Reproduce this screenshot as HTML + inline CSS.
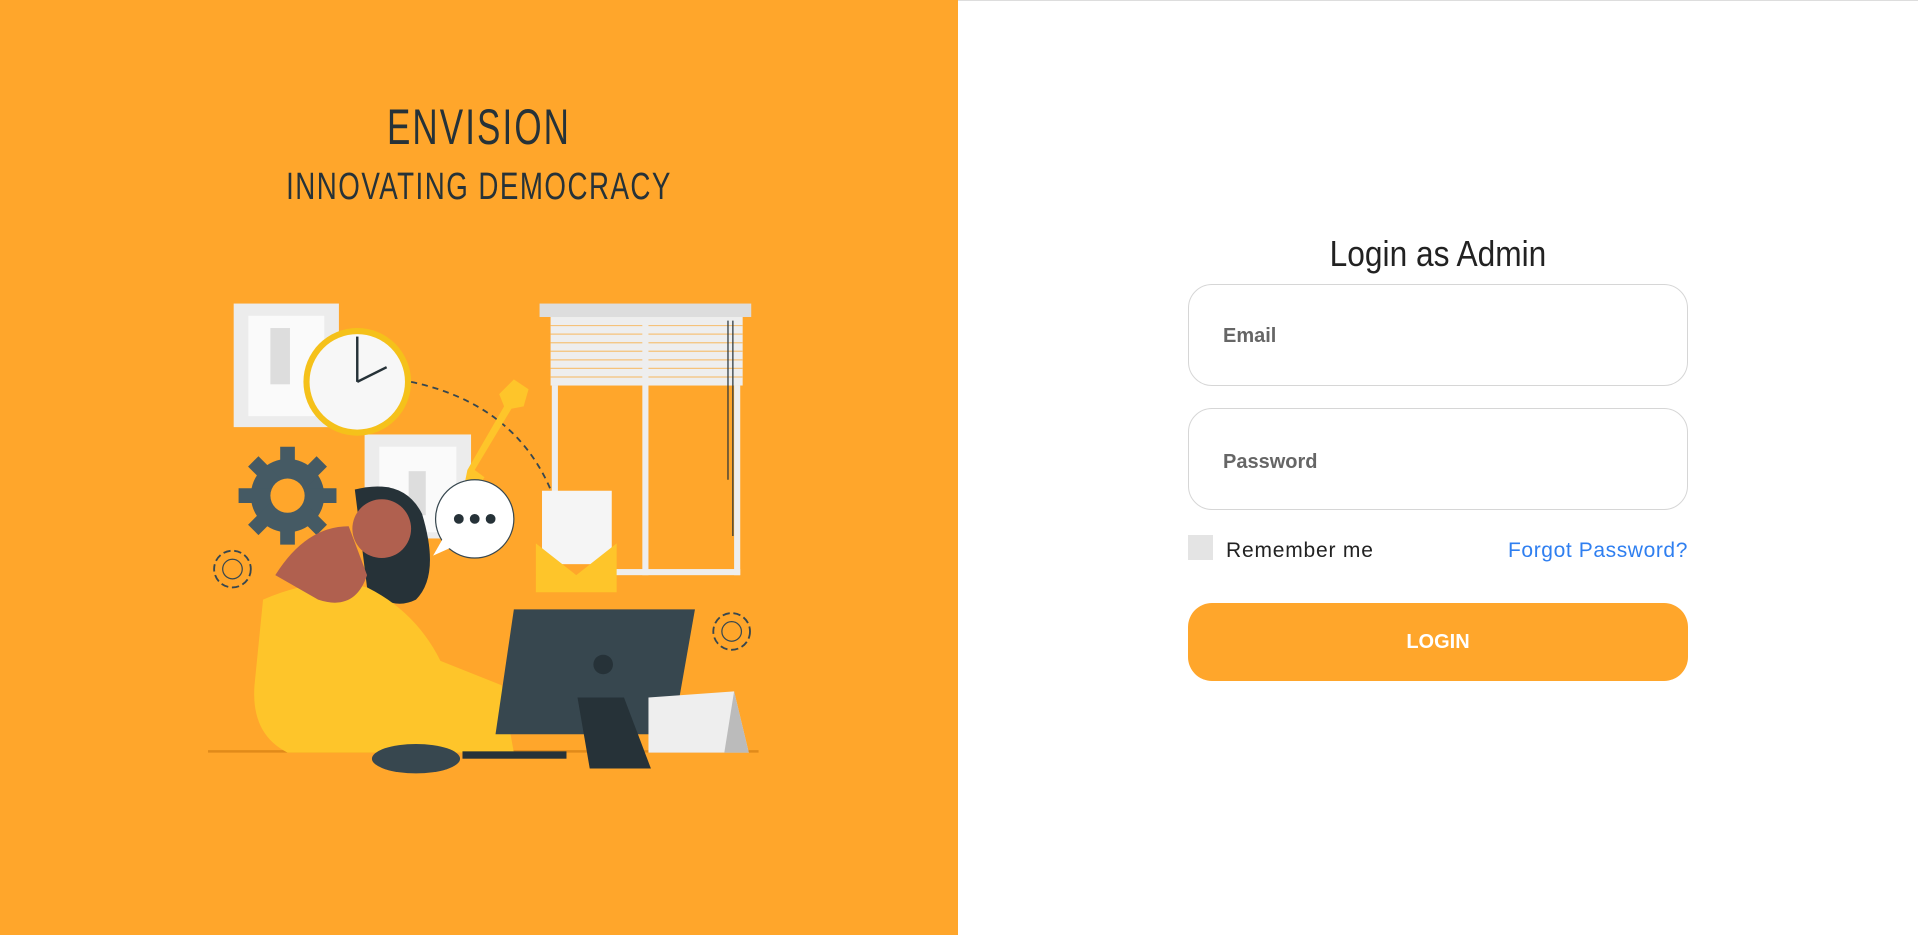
<!DOCTYPE html>
<html><head><meta charset="utf-8"><style>
html,body{margin:0;padding:0;width:1918px;height:935px;overflow:hidden;background:#fff;font-family:"Liberation Sans",sans-serif}
.left{position:absolute;left:0;top:0;width:958px;height:935px;background:#ffa62b}
.topline{position:absolute;left:958px;top:0;width:960px;height:1px;background:#ddd}
.cond{font-family:"Liberation Sans",sans-serif;color:#263238;text-align:center;position:absolute;left:0;width:958px;white-space:nowrap}
.t1{top:98px;font-size:50px;letter-spacing:3px;transform:scaleX(0.70)}
.t2{top:166px;font-size:38px;letter-spacing:2px;transform:scaleX(0.73)}
svg.ill{position:absolute;left:0;top:0}
.h{position:absolute;left:1188px;width:500px;top:233px;text-align:center;font-size:36px;color:#222;transform:scaleX(0.88)}
.inp{position:absolute;left:1188px;height:102px;border:1px solid #d6d6d6;border-radius:24px;box-sizing:border-box;width:500px}
.inp span{position:absolute;left:34px;font-weight:bold;font-size:20px;color:#666}
.cb{position:absolute;left:1188px;top:535px;width:25px;height:25px;background:#e4e4e4}
.rm{position:absolute;left:1226px;top:539px;font-size:21px;color:#222;letter-spacing:0.8px}
.fp{position:absolute;right:230px;top:539px;font-size:21px;color:#2f7ff0;letter-spacing:0.6px}
.btn{position:absolute;left:1188px;top:603px;width:500px;height:78px;background:#ffa62b;border-radius:24px;color:#fff;font-weight:bold;font-size:20px;text-align:center;line-height:78px}
</style></head><body>
<div class="left">
<svg class="ill" width="958" height="935" viewBox="0 0 783 764">
<line x1="170" y1="614" x2="620" y2="614" stroke="#e08a1a" stroke-width="2"/>
<rect x="191" y="248" width="86" height="101" fill="#ececec"/><rect x="203" y="258" width="62" height="82" fill="#fafafa"/><rect x="221" y="268" width="16" height="46" fill="#ddd"/>
<rect x="298" y="355" width="87" height="85" fill="#ececec"/><rect x="310" y="365" width="63" height="70" fill="#fafafa"/><rect x="334" y="385" width="14" height="36" fill="#ddd"/>
<circle cx="292" cy="312" r="44" fill="#f5c11a"/><circle cx="292" cy="312" r="39" fill="#f7f7f7"/>
<line x1="292" y1="312" x2="292" y2="275" stroke="#263238" stroke-width="2"/><line x1="292" y1="312" x2="316" y2="300" stroke="#263238" stroke-width="2"/>
<path d="M336 312 Q420 330 450 400" fill="none" stroke="#37474f" stroke-width="1.5" stroke-dasharray="5 4"/>
<path d="M420 310 l12 8 -4 14 -10 2 -30 50 8 6 -8 12 -8-8 2-10 30-52 -4-10z" fill="#fec52a"/>
<g fill="#455a64"><circle cx="235" cy="405" r="30"/><g stroke="#455a64" stroke-width="12"><line x1="235" y1="365" x2="235" y2="445"/><line x1="195" y1="405" x2="275" y2="405"/><line x1="207" y1="377" x2="263" y2="433"/><line x1="263" y1="377" x2="207" y2="433"/></g></g><circle cx="235" cy="405" r="14" fill="#ffa62b"/>
<circle cx="190" cy="465" r="15" fill="none" stroke="#37474f" stroke-width="1.5" stroke-dasharray="6 3"/><circle cx="190" cy="465" r="8" fill="none" stroke="#37474f"/>
<circle cx="598" cy="516" r="15" fill="none" stroke="#37474f" stroke-width="1.5" stroke-dasharray="6 3"/><circle cx="598" cy="516" r="8" fill="none" stroke="#37474f"/>
<rect x="441" y="248" width="173" height="11" fill="#ddd"/>
<rect x="450" y="259" width="157" height="56" fill="#eee"/>
<g stroke="#f5c27a" stroke-width="1"><line x1="450" y1="266" x2="607" y2="266"/><line x1="450" y1="273" x2="607" y2="273"/><line x1="450" y1="280" x2="607" y2="280"/><line x1="450" y1="287" x2="607" y2="287"/><line x1="450" y1="294" x2="607" y2="294"/><line x1="450" y1="301" x2="607" y2="301"/><line x1="450" y1="308" x2="607" y2="308"/></g>
<g fill="#eee"><rect x="451" y="315" width="5" height="155"/><rect x="525" y="259" width="5" height="211"/><rect x="600" y="315" width="5" height="155"/><rect x="500" y="465" width="105" height="5"/></g>
<line x1="595" y1="262" x2="595" y2="392" stroke="#263238"/><line x1="599" y1="262" x2="599" y2="438" stroke="#263238"/>
<rect x="443" y="401" width="57" height="60" fill="#f5f5f5"/>
<path d="M438 444 L471 470 L504 444 L504 484 L438 484 Z" fill="#fec52a"/>
<circle cx="388" cy="424" r="32" fill="#fff" stroke="#37474f"/><path d="M362 440 l-8 14 18-8z" fill="#fff"/>
<circle cx="375" cy="424" r="4" fill="#263238"/><circle cx="388" cy="424" r="4" fill="#263238"/><circle cx="401" cy="424" r="4" fill="#263238"/>
<path d="M290 400 Q330 390 345 420 Q360 470 340 490 Q320 500 300 480 Z" fill="#263238"/>
<circle cx="312" cy="432" r="24" fill="#b0604f"/>
<path d="M215 490 Q260 470 300 480 Q340 500 360 540 L410 560 L420 615 L235 615 Q205 600 208 560 Z" fill="#fec52a"/>
<path d="M225 470 Q250 430 285 430 L300 470 Q290 500 260 490 Z" fill="#b0604f"/>
<path d="M420 498 L568 498 L550 600 L405 600 Z" fill="#37474f"/>
<circle cx="493" cy="543" r="8" fill="#263238"/>
<path d="M472 570 L510 570 L532 628 L482 628 Z" fill="#263238"/>
<rect x="378" y="614" width="85" height="6" fill="#263238"/>
<path d="M530 570 L600 565 L612 615 L530 615 Z" fill="#eee"/><path d="M600 565 L612 615 L592 615 Z" fill="#bbb"/>
<ellipse cx="340" cy="620" rx="36" ry="12" fill="#37474f"/>
</svg>
<div class="cond t1">ENVISION</div>
<div class="cond t2">INNOVATING DEMOCRACY</div>
</div>
<div class="topline"></div>
<div class="h">Login as Admin</div>
<div class="inp" style="top:284px"><span style="top:40px">Email</span></div>
<div class="inp" style="top:408px"><span style="top:42px">Password</span></div>
<div class="cb"></div>
<div class="rm">Remember me</div>
<div class="fp">Forgot Password?</div>
<div class="btn">LOGIN</div>
</body></html>
